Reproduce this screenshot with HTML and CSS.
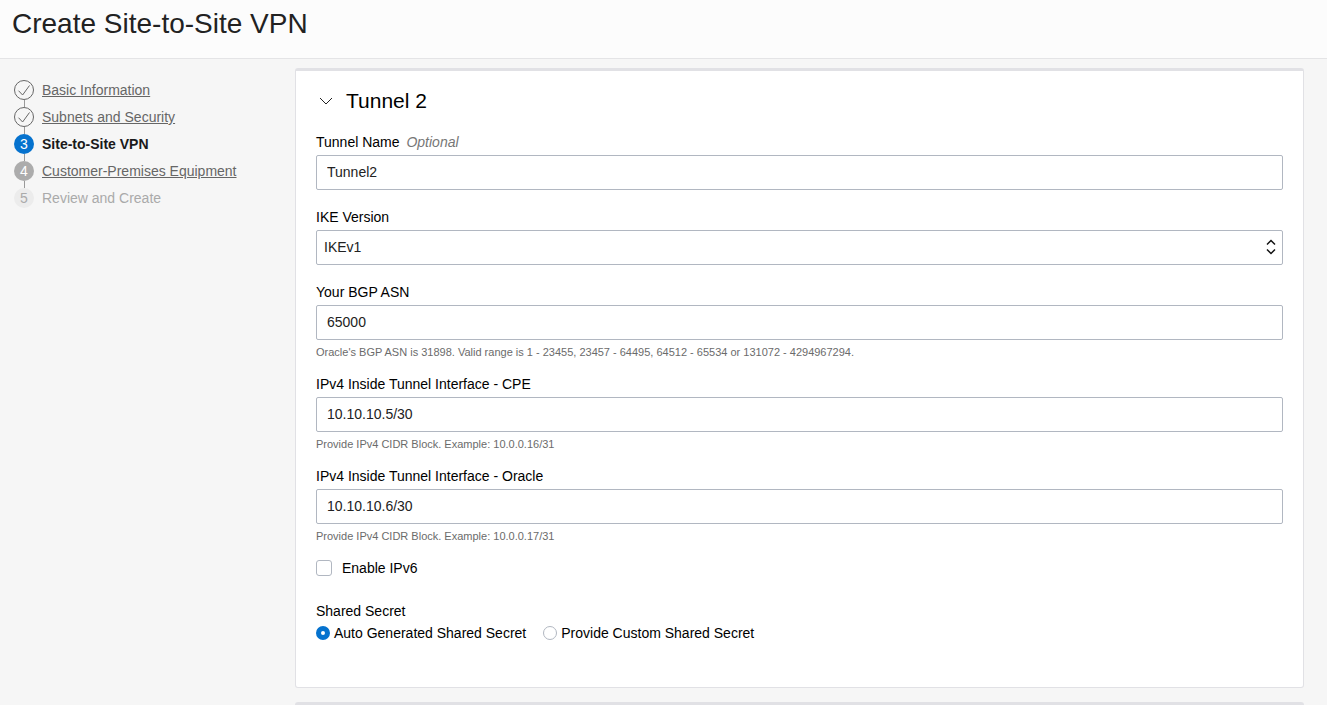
FILE: index.html
```html
<!DOCTYPE html>
<html lang="en">
<head>
<meta charset="utf-8">
<title>Create Site-to-Site VPN</title>
<link rel="stylesheet" href="styles.css">
</head>
<body>
<header class="page-header">
  <h1 class="page-title">Create Site-to-Site VPN</h1>
</header>
<div class="layout">
  <nav class="steps" aria-label="Progress">
    <ol class="step-list">
      <li class="step">
        <svg class="step-icon" viewBox="0 0 20 20" aria-hidden="true"><circle cx="10" cy="10" r="9.5"/><path d="M4.5 10.7 8.6 15 15.5 5.5"/></svg>
        <a class="step-link" href="#basic">Basic Information</a>
      </li>
      <li class="step">
        <svg class="step-icon" viewBox="0 0 20 20" aria-hidden="true"><circle cx="10" cy="10" r="9.5"/><path d="M4.5 10.7 8.6 15 15.5 5.5"/></svg>
        <a class="step-link" href="#subnets">Subnets and Security</a>
      </li>
      <li class="step step-current" aria-current="step">
        <span class="step-number">3</span>
        <span class="step-text">Site-to-Site VPN</span>
      </li>
      <li class="step step-next">
        <span class="step-number">4</span>
        <a class="step-link" href="#cpe">Customer-Premises Equipment</a>
      </li>
      <li class="step step-disabled">
        <span class="step-number">5</span>
        <span class="step-text">Review and Create</span>
      </li>
    </ol>
  </nav>
  <main class="content">
    <section class="card">
      <h2 class="card-title">
        <button class="card-toggle" type="button" aria-expanded="true">
          <svg class="chevron" viewBox="0 0 14 8" aria-hidden="true"><path d="M1 1 7 7 13 1"/></svg>
          Tunnel 2
        </button>
      </h2>
      <form class="form">
        <div class="field">
          <label class="label" for="name">Tunnel Name <em class="optional">Optional</em></label>
          <input class="control" id="name" type="text" value="Tunnel2">
        </div>
        <div class="field">
          <label class="label" for="ike">IKE Version</label>
          <div class="select-wrap">
            <select class="control select" id="ike"><option>IKEv1</option><option>IKEv2</option></select>
            <svg class="select-arrows" viewBox="0 0 10 16" aria-hidden="true"><path d="M1 5.5 5 1.5 9 5.5M1 10.5 5 14.5 9 10.5"/></svg>
          </div>
        </div>
        <div class="field field-hinted">
          <label class="label" for="asn">Your BGP ASN</label>
          <input class="control" id="asn" type="text" value="65000" aria-describedby="asn-hint">
          <p class="hint" id="asn-hint">Oracle's BGP ASN is 31898. Valid range is 1 - 23455, 23457 - 64495, 64512 - 65534 or 131072 - 4294967294.</p>
        </div>
        <div class="field field-hinted">
          <label class="label" for="cpe-ip">IPv4 Inside Tunnel Interface - CPE</label>
          <input class="control" id="cpe-ip" type="text" value="10.10.10.5/30" aria-describedby="cpe-hint">
          <p class="hint" id="cpe-hint">Provide IPv4 CIDR Block. Example: 10.0.0.16/31</p>
        </div>
        <div class="field field-hinted">
          <label class="label" for="oracle-ip">IPv4 Inside Tunnel Interface - Oracle</label>
          <input class="control" id="oracle-ip" type="text" value="10.10.10.6/30" aria-describedby="oracle-hint">
          <p class="hint" id="oracle-hint">Provide IPv4 CIDR Block. Example: 10.0.0.17/31</p>
        </div>
        <div class="check-row">
          <input class="checkbox" id="ipv6" type="checkbox">
          <label for="ipv6">Enable IPv6</label>
        </div>
        <fieldset class="secret">
          <legend class="legend">Shared Secret</legend>
          <div class="radios">
            <div class="radio-option">
              <input class="radio" id="auto" type="radio" name="secret" checked>
              <label for="auto">Auto Generated Shared Secret</label>
            </div>
            <div class="radio-option">
              <input class="radio" id="custom" type="radio" name="secret">
              <label for="custom">Provide Custom Shared Secret</label>
            </div>
          </div>
        </fieldset>
      </form>
    </section>
    <section class="card-edge"></section>
  </main>
</div>
</body>
</html>
```
FILE: styles.css
```css
* {
  box-sizing: border-box;
}

body {
  display: flex;
  flex-direction: column;
  min-height: 100vh;
  margin: 0;
  background: #f6f6f6;
  color: #000;
  font: 14px/20px "Liberation Sans", Arial, sans-serif;
}

.page-header {
  padding: 8px 12px 18px;
  background: #fcfcfc;
  border-bottom: 1px solid #e4e4e6;
}

.page-title {
  margin: 0;
  color: #222;
  font-size: 28px;
  font-weight: 400;
  line-height: 32px;
}

.layout {
  display: flex;
  flex: 1;
}

.steps {
  flex: 0 0 295px;
  padding: 21px 14px;
}

.step-list {
  display: flex;
  flex-direction: column;
  gap: 7px;
  margin: 0;
  padding: 0;
  list-style: none;
}

.step {
  position: relative;
  display: flex;
  gap: 8px;
  color: #666;
}

.step + .step::before {
  position: absolute;
  top: -7px;
  left: 10px;
  width: 1px;
  height: 7px;
  background: #999;
  content: "";
}

.step-icon {
  width: 20px;
  height: 20px;
  fill: none;
  stroke: #666;
}

.step-number {
  width: 20px;
  border-radius: 50%;
  text-align: center;
}

.step-link {
  color: #666;
  text-decoration: underline;
}

.step-current {
  color: #1a1a1a;
  font-weight: 700;
}

.step-current .step-number {
  background: #0572ce;
  color: #fff;
  font-weight: 400;
}

.step-next .step-number {
  background: #acacac;
  color: #fff;
}

.step-disabled {
  color: #aaa;
}

.step-disabled .step-number {
  background: #ececec;
}

.content {
  display: flex;
  flex: 1;
  flex-direction: column;
  gap: 14px;
  padding: 9px 23px 0 0;
}

.card {
  padding: 18px 20px 44px;
  background: #fff;
  border: 1px solid #e1e1e5;
  border-top-width: 3px;
  border-radius: 3px;
}

.card-edge {
  border-top: 3px solid #e1e1e5;
  border-radius: 3px 3px 0 0;
}

.card-title {
  margin: 0 0 19px;
  line-height: 24px;
}

.card-toggle {
  display: flex;
  align-items: center;
  gap: 13px;
  padding: 0 0 0 3px;
  background: none;
  border: 0;
  color: #000;
  font: 21px/24px "Liberation Sans", Arial, sans-serif;
}

.chevron {
  width: 14px;
  height: 8px;
  fill: none;
  stroke: #222;
}

.field {
  padding-bottom: 17px;
}

.field-hinted {
  padding-bottom: 14px;
}

.label {
  display: block;
  margin-bottom: 3px;
}

.optional {
  margin-left: 3px;
  color: #777;
}

.control {
  display: block;
  width: 100%;
  height: 35px;
  padding: 0 10px 2px;
  background: #fff;
  border: 1px solid #b1b7c1;
  border-radius: 2px;
  color: #222;
  font: inherit;
}

.select-wrap {
  position: relative;
}

.select {
  padding: 0 7px 2px;
  appearance: none;
}

.select-arrows {
  position: absolute;
  top: 9px;
  right: 7px;
  width: 10px;
  height: 16px;
  fill: none;
  stroke: #111;
  stroke-width: 1.5;
  pointer-events: none;
}

.hint {
  margin: 4px 0 0;
  color: #6b6b6b;
  font-size: 11px;
  line-height: 16px;
}

.check-row {
  display: flex;
  align-items: center;
  gap: 10px;
}

.checkbox,
.radio {
  flex: none;
  margin: 0;
  background: #fff;
  border: 1px solid #b1b7c1;
  appearance: none;
}

.checkbox {
  width: 16px;
  height: 16px;
  border-radius: 3px;
}

.secret {
  margin: 23px 0 0;
  padding: 0;
  border: 0;
}

.legend {
  padding: 0;
  margin-bottom: 2px;
}

.radios {
  display: flex;
  gap: 17px;
}

.radio-option {
  display: flex;
  align-items: center;
  gap: 4px;
}

.radio {
  width: 14px;
  height: 14px;
  border-radius: 50%;
}

.radio:checked {
  border: 5px solid #0572ce;
}
```
